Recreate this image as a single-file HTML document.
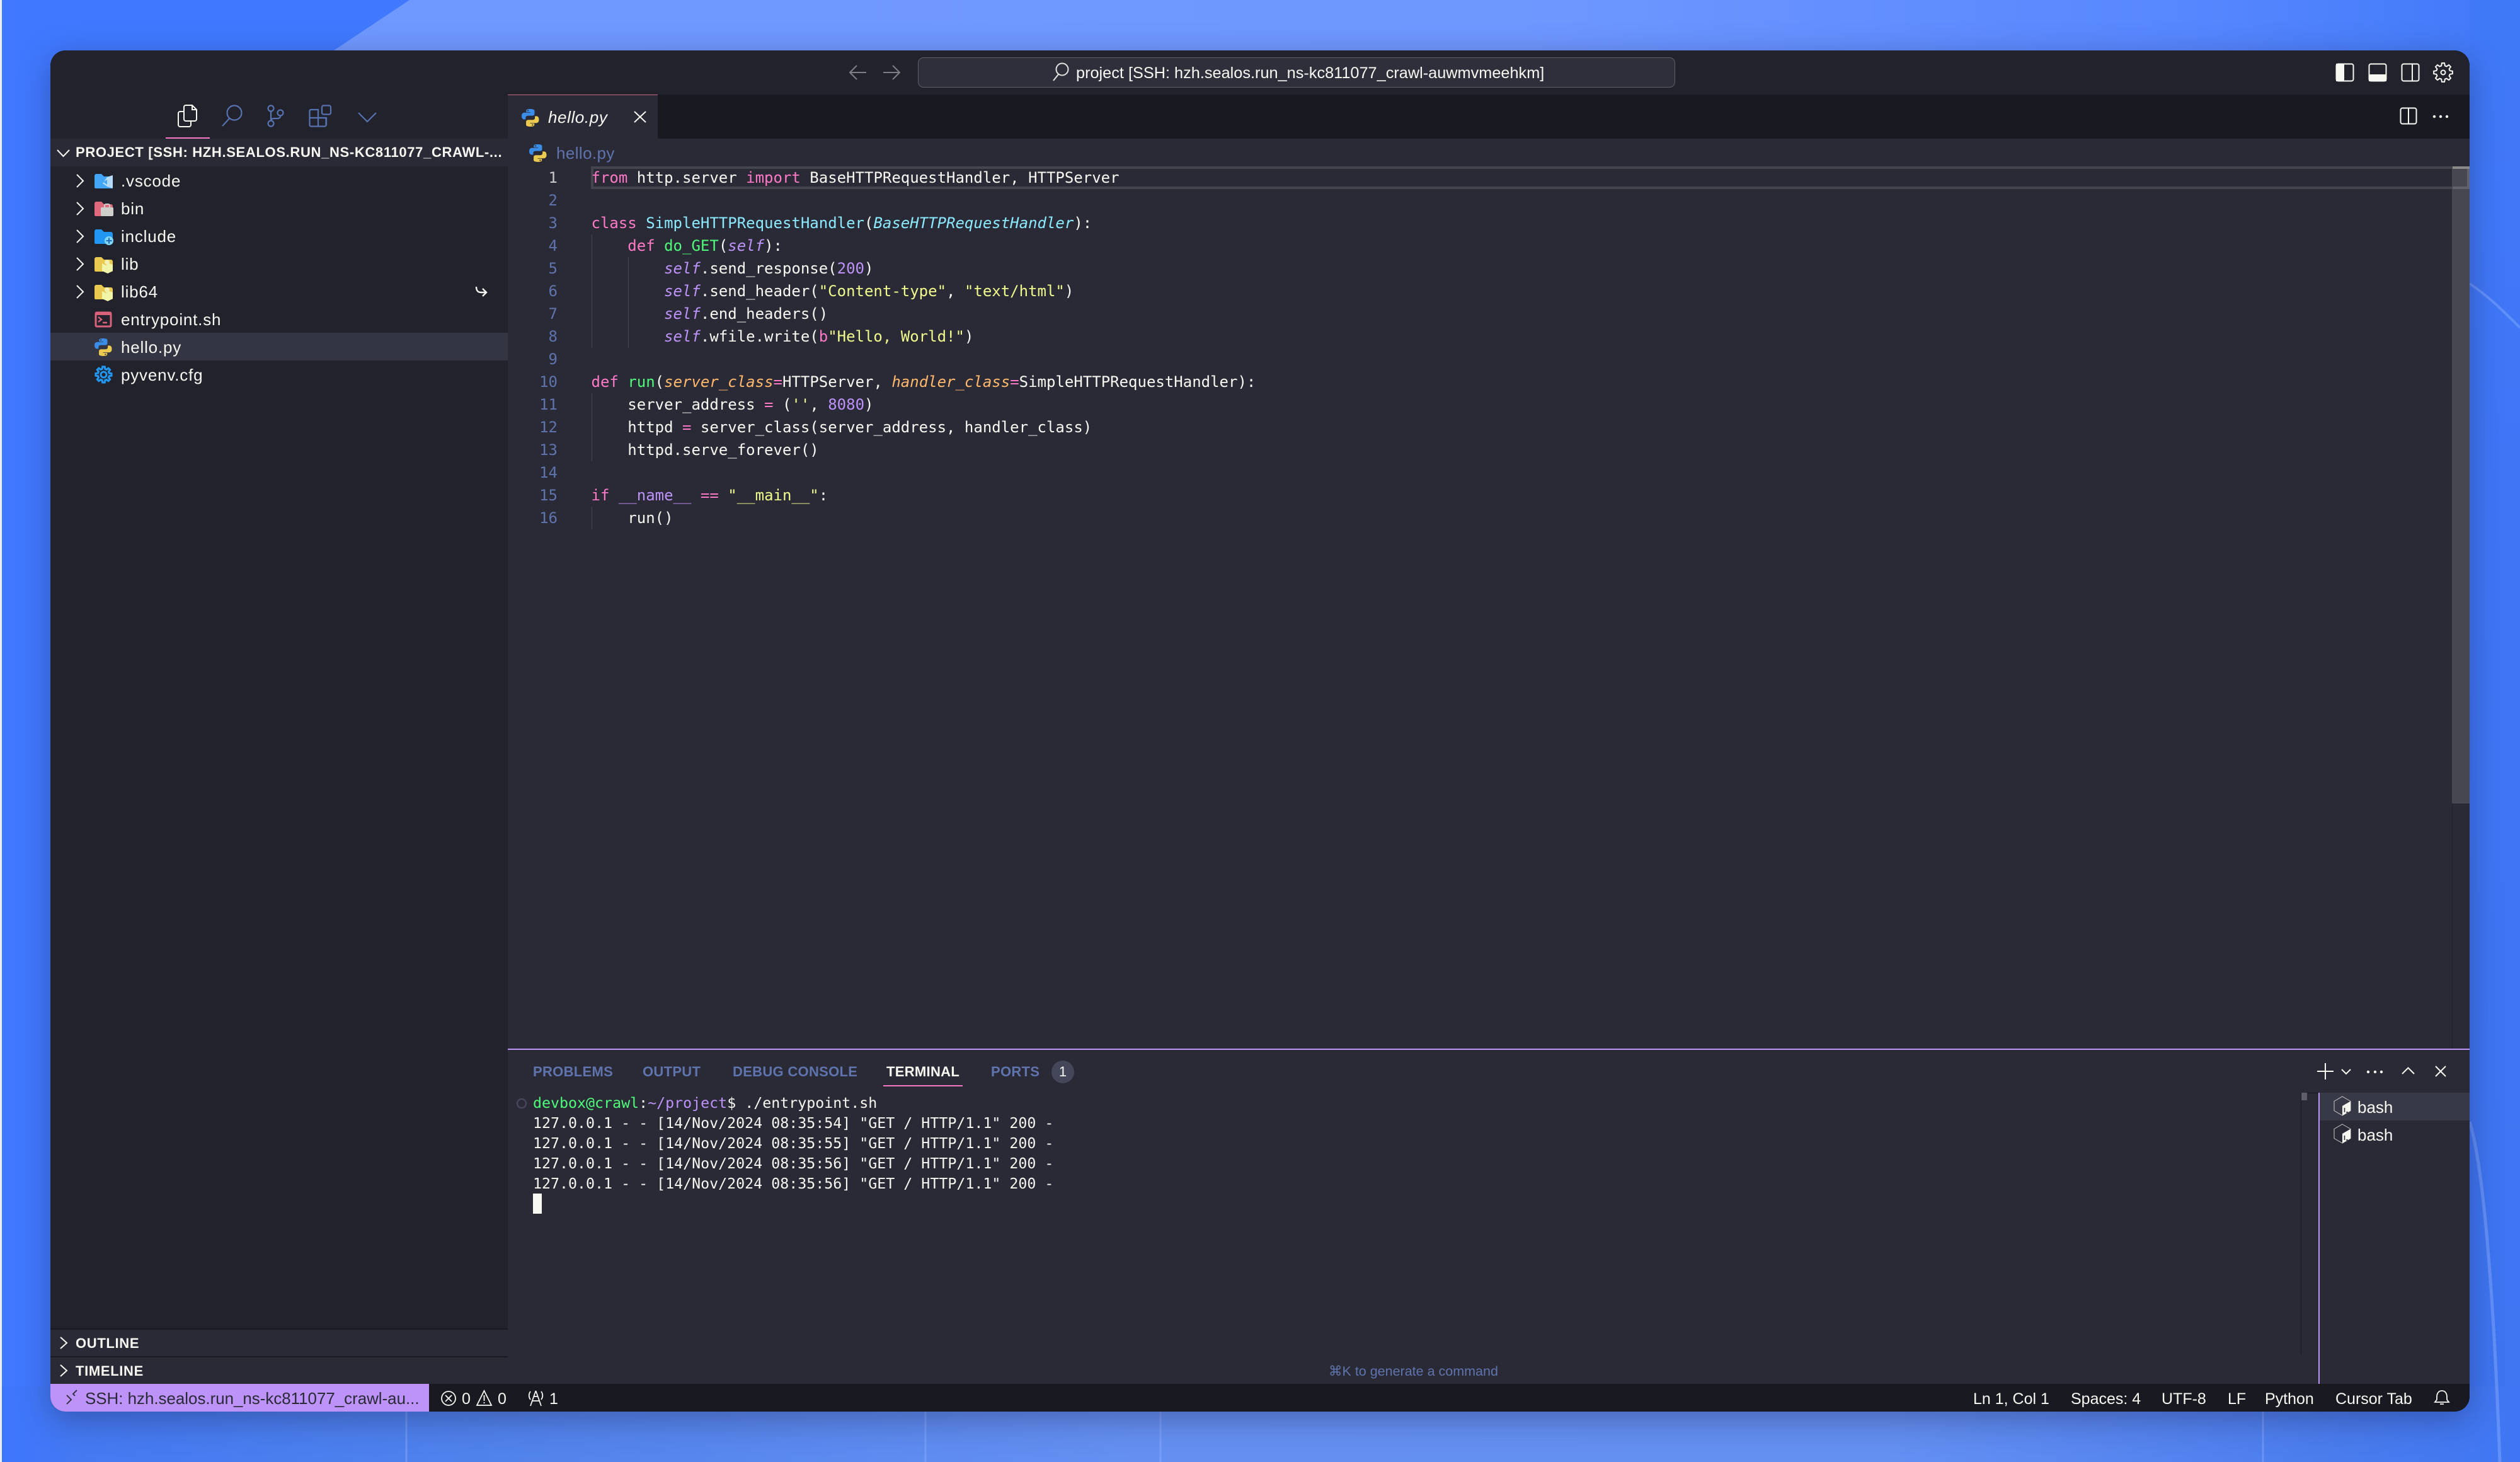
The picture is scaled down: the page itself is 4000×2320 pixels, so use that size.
<!DOCTYPE html>
<html><head><meta charset="utf-8">
<style>
html,body{margin:0;padding:0;width:4000px;height:2320px;overflow:hidden;background:#4179ff}
body{position:relative;font-family:"Liberation Sans",sans-serif;-webkit-font-smoothing:antialiased}
#bg{position:absolute;left:0;top:0}
#shadow{position:absolute;left:80px;top:80px;width:3840px;height:2160px;border-radius:24px;box-shadow:0 12px 50px rgba(25,30,70,.38)}
#win{position:absolute;left:80px;top:80px;width:3840px;height:2160px;border-radius:24px;overflow:hidden;background:#2a2a36}
#in{position:absolute;left:-80px;top:-80px;width:4000px;height:2320px}
.b{position:absolute}
.t{position:absolute;white-space:pre;color:#f8f8f2}
.r{font-size:26px;line-height:44px;height:44px;left:192px;letter-spacing:.8px}
.h{font-size:22px;line-height:44px;height:44px;left:120px;font-weight:bold;letter-spacing:.66px}
.p{font-size:22px;line-height:44px;height:44px;top:1679px;font-weight:bold;color:#5f74ad;letter-spacing:.3px}
.s{font-size:25px;line-height:44px;height:44px;top:2198px}
.c{position:absolute;left:938.5px;white-space:pre;font-family:"DejaVu Sans Mono","Liberation Mono",monospace;font-size:24px;line-height:36px;height:36px;color:#f8f8f2}
.n{position:absolute;left:800px;width:85px;text-align:right;font-family:"DejaVu Sans Mono","Liberation Mono",monospace;font-size:24px;line-height:36px;height:36px;color:#5f74ad}
.m{position:absolute;left:846px;white-space:pre;font-family:"DejaVu Sans Mono","Liberation Mono",monospace;font-size:23.27px;line-height:32px;height:32px;color:#f8f8f2}
.k{color:#ff79c6}.g{color:#50fa7b}.y{color:#8be9fd}.yi{color:#8be9fd;font-style:italic}.u{color:#bd93f9}.ui{color:#bd93f9;font-style:italic}.q{color:#f1fa8c}.o{color:#ffb86c;font-style:italic}
#ic{position:absolute;left:0;top:0}
</style></head>
<body>
<svg id="bg" width="4000" height="2320" viewBox="0 0 4000 2320">
<defs>
<linearGradient id="wedge" x1="0" y1="0" x2="1" y2="0"><stop offset="0" stop-color="#7099ff"/><stop offset=".55" stop-color="#6f98ff"/><stop offset=".85" stop-color="#5787ff"/><stop offset="1" stop-color="#4079f8"/></linearGradient>
<linearGradient id="bot" x1="0" y1="0" x2="1" y2="0"><stop offset="0" stop-color="#3d76ff"/><stop offset=".03" stop-color="#4479f2"/><stop offset=".2" stop-color="#5183ec"/><stop offset=".45" stop-color="#6590f2"/><stop offset=".75" stop-color="#6490f2"/><stop offset=".93" stop-color="#4a7ced"/><stop offset="1" stop-color="#3f76f3"/></linearGradient>
<linearGradient id="rt" x1="0" y1="0" x2="0" y2="1"><stop offset="0" stop-color="#4079f8"/><stop offset=".3" stop-color="#3f76f5"/><stop offset="1" stop-color="#3d74ee"/></linearGradient>
</defs>
<rect width="4000" height="2320" fill="#4079ff"/>
<polygon points="650,0 4000,0 4000,260 500,100" fill="url(#wedge)"/>
<rect x="3920" y="0" width="80" height="2320" fill="url(#rt)" opacity=".85"/>
<rect x="0" y="2200" width="4000" height="120" fill="url(#bot)"/>
<g stroke="#8fb0ff" stroke-width="3" fill="none" opacity=".45">
<path d="M645 2240V2320M1469 2240V2320M1842 2240V2320M3592 2240V2320"/>
<path d="M3920 450C3950 470 3975 495 4000 520" stroke-width="4"/>
<path d="M3920 1780C3945 1860 3960 2100 3968 2320" stroke-width="5"/>
</g>
<rect x="0" y="0" width="3" height="2320" fill="#e8eefc"/>
</svg>
<div id="shadow"></div>
<div id="win"><div id="in">
<!-- panels -->
<div class="b" style="left:80px;top:80px;width:3840px;height:70px;background:#21222c"></div>
<div class="b" style="left:80px;top:150px;width:726px;height:2046px;background:#21222c"></div>
<div class="b" style="left:806px;top:150px;width:3114px;height:70px;background:#191a21"></div>
<div class="b" style="left:806px;top:150px;width:238px;height:70px;background:#2a2a36"></div>
<div class="b" style="left:806px;top:150px;width:238px;height:1px;background:#c9627f"></div>
<div class="b" style="left:1457px;top:91px;width:1200px;height:46px;background:#2f2f3b;border:1.5px solid #5f5f69;border-radius:9px"></div>
<div class="b" style="left:80px;top:220px;width:726px;height:44px;background:#2a2a36"></div>
<div class="b" style="left:80px;top:528px;width:726px;height:44px;background:#343543"></div>
<div class="b" style="left:80px;top:2108px;width:726px;height:2px;background:#191a21"></div>
<div class="b" style="left:80px;top:2110px;width:726px;height:42px;background:#2a2a36"></div>
<div class="b" style="left:80px;top:2152px;width:726px;height:2px;background:#191a21"></div>
<div class="b" style="left:80px;top:2154px;width:726px;height:42px;background:#2a2a36"></div>
<div class="b" style="left:80px;top:2196px;width:3840px;height:44px;background:#191a21"></div>
<div class="b" style="left:80px;top:2196px;width:601px;height:44px;background:#bd93f9"></div>
<!-- editor decorations -->
<div class="b" style="left:938px;top:264px;width:2954px;height:36px;box-sizing:border-box;border:4px solid #45454f;border-right:0"></div>
<div class="b" style="left:3892px;top:264px;width:28px;height:1011px;background:#474752"></div>
<div class="b" style="left:3893px;top:264px;width:27px;height:4px;background:#8a8a88"></div>
<div class="b" style="left:3916px;top:268px;width:4px;height:32px;background:#62626c"></div>
<div class="b" style="left:3893px;top:296px;width:27px;height:4px;background:#62626c"></div>
<div class="b" style="left:3892px;top:1275px;width:1px;height:389px;background:#21222c"></div>
<div class="b" style="left:939px;top:372px;width:1px;height:180px;background:#454652"></div>
<div class="b" style="left:997px;top:408px;width:1px;height:144px;background:#454652"></div>
<div class="b" style="left:939px;top:624px;width:1px;height:108px;background:#454652"></div>
<div class="b" style="left:939px;top:804px;width:1px;height:36px;background:#454652"></div>
<!-- panel -->
<div class="b" style="left:806px;top:1664px;width:3114px;height:2px;background:#bd93f9"></div>
<div class="b" style="left:1402px;top:1722px;width:126px;height:2px;background:#ff79c6"></div>
<div class="b" style="left:1669px;top:1683px;width:36px;height:36px;border-radius:18px;background:#44475a"></div>
<div class="b" style="left:846px;top:1894px;width:14px;height:32px;background:#f8f8f2"></div>
<div class="b" style="left:3652px;top:1734px;width:1px;height:416px;background:#191a21"></div>
<div class="b" style="left:3652px;top:1734px;width:28px;height:1px;background:#191a21"></div>
<div class="b" style="left:3653px;top:1734px;width:9px;height:12px;background:#5f5d6b"></div>
<div class="b" style="left:3680px;top:1734px;width:2px;height:462px;background:#bd93f9"></div>
<div class="b" style="left:3682px;top:1734px;width:238px;height:44px;background:#383947"></div>

<!-- title -->
<div class="t" style="left:1708px;top:94px;font-size:25.3px;line-height:44px">project [SSH: hzh.sealos.run_ns-kc811077_crawl-auwmvmeehkm]</div>
<!-- tab -->
<div class="t" style="left:870px;top:164px;font-size:26px;line-height:44px;font-style:italic;letter-spacing:.6px">hello.py</div>
<div class="t" style="left:883px;top:221px;font-size:26px;line-height:44px;color:#5f74ad;letter-spacing:.4px">hello.py</div>
<!-- sidebar -->
<div class="t h" style="top:220px">PROJECT [SSH: HZH.SEALOS.RUN_NS-KC811077_CRAWL-...</div>
<div class="t r" style="top:265px">.vscode</div>
<div class="t r" style="top:309px">bin</div>
<div class="t r" style="top:353px">include</div>
<div class="t r" style="top:397px">lib</div>
<div class="t r" style="top:441px">lib64</div>
<div class="t r" style="top:485px">entrypoint.sh</div>
<div class="t r" style="top:529px">hello.py</div>
<div class="t r" style="top:573px">pyvenv.cfg</div>
<div class="t h" style="top:2110px">OUTLINE</div>
<div class="t h" style="top:2154px">TIMELINE</div>

<!-- line numbers -->
<div class="n" style="top:264px;color:#c8c8c8">1</div>
<div class="n" style="top:300px">2</div><div class="n" style="top:336px">3</div><div class="n" style="top:372px">4</div>
<div class="n" style="top:408px">5</div><div class="n" style="top:444px">6</div><div class="n" style="top:480px">7</div>
<div class="n" style="top:516px">8</div><div class="n" style="top:552px">9</div><div class="n" style="top:588px">10</div>
<div class="n" style="top:624px">11</div><div class="n" style="top:660px">12</div><div class="n" style="top:696px">13</div>
<div class="n" style="top:732px">14</div><div class="n" style="top:768px">15</div><div class="n" style="top:804px">16</div>
<!-- code -->
<div class="c" style="top:264px"><span class="k">from</span> http.server <span class="k">import</span> BaseHTTPRequestHandler, HTTPServer</div>
<div class="c" style="top:336px"><span class="k">class</span> <span class="y">SimpleHTTPRequestHandler</span>(<span class="yi">BaseHTTPRequestHandler</span>):</div>
<div class="c" style="top:372px">    <span class="k">def</span> <span class="g">do_GET</span>(<span class="ui">self</span>):</div>
<div class="c" style="top:408px">        <span class="ui">self</span>.send_response(<span class="u">200</span>)</div>
<div class="c" style="top:444px">        <span class="ui">self</span>.send_header(<span class="q">"Content-type"</span>, <span class="q">"text/html"</span>)</div>
<div class="c" style="top:480px">        <span class="ui">self</span>.end_headers()</div>
<div class="c" style="top:516px">        <span class="ui">self</span>.wfile.write(<span class="k">b</span><span class="q">"Hello, World!"</span>)</div>
<div class="c" style="top:588px"><span class="k">def</span> <span class="g">run</span>(<span class="o">server_class</span><span class="k">=</span>HTTPServer, <span class="o">handler_class</span><span class="k">=</span>SimpleHTTPRequestHandler):</div>
<div class="c" style="top:624px">    server_address <span class="k">=</span> (<span class="q">''</span>, <span class="u">8080</span>)</div>
<div class="c" style="top:660px">    httpd <span class="k">=</span> server_class(server_address, handler_class)</div>
<div class="c" style="top:696px">    httpd.serve_forever()</div>
<div class="c" style="top:768px"><span class="k">if</span> <span class="u">__name__</span> <span class="k">==</span> <span class="q">"__main__"</span>:</div>
<div class="c" style="top:804px">    run()</div>

<!-- panel tabs -->
<div class="t p" style="left:846px">PROBLEMS</div>
<div class="t p" style="left:1020px">OUTPUT</div>
<div class="t p" style="left:1163px">DEBUG CONSOLE</div>
<div class="t p" style="left:1407px;color:#f8f8f2">TERMINAL</div>
<div class="t p" style="left:1573px">PORTS</div>
<div class="t" style="left:1669px;width:36px;text-align:center;top:1679px;font-size:22px;line-height:44px">1</div>
<!-- terminal -->
<div class="m" style="top:1735px"><span class="g">devbox@crawl</span>:<span class="u">~/project</span>$ ./entrypoint.sh</div>
<div class="m" style="top:1767px">127.0.0.1 - - [14/Nov/2024 08:35:54] "GET / HTTP/1.1" 200 -</div>
<div class="m" style="top:1799px">127.0.0.1 - - [14/Nov/2024 08:35:55] "GET / HTTP/1.1" 200 -</div>
<div class="m" style="top:1831px">127.0.0.1 - - [14/Nov/2024 08:35:56] "GET / HTTP/1.1" 200 -</div>
<div class="m" style="top:1863px">127.0.0.1 - - [14/Nov/2024 08:35:56] "GET / HTTP/1.1" 200 -</div>
<div class="t" style="left:3742px;top:1735px;font-size:26px;line-height:44px">bash</div>
<div class="t" style="left:3742px;top:1779px;font-size:26px;line-height:44px">bash</div>
<div class="t" style="left:2109px;top:2154px;font-size:21.5px;line-height:44px;color:#5f74ad;font-family:'Liberation Sans','DejaVu Sans',sans-serif">⌘K to generate a command</div>
<!-- status -->
<div class="t s" style="left:135px;color:#282a36;font-size:25.9px">SSH: hzh.sealos.run_ns-kc811077_crawl-au...</div>
<div class="t s" style="left:733px">0</div>
<div class="t s" style="left:790px">0</div>
<div class="t s" style="left:872px">1</div>
<div class="t s" style="left:3132px">Ln 1, Col 1</div>
<div class="t s" style="left:3287px">Spaces: 4</div>
<div class="t s" style="left:3431px">UTF-8</div>
<div class="t s" style="left:3536px">LF</div>
<div class="t s" style="left:3595px">Python</div>
<div class="t s" style="left:3707px">Cursor Tab</div>

<!-- icons -->
<svg id="ic" width="4000" height="2320" viewBox="0 0 4000 2320" fill="none">
<defs>
<g id="py"><path fill="#3b8ee8" d="M11.9 1C7.600 1 8 2.900 8 2.900v2h4.100v.6H6.200S3.400 5.200 3.400 9.700s2.500 4.300 2.500 4.300h1.500v-2.100s-.1-2.500 2.400-2.500h4.100s2.300 0 2.300-2.300V3.300S16.600 1 11.900 1zM9.700 2.300a.75.75 0 1 1 0 1.500.75.75 0 0 1 0-1.500z"/><path fill="#ecc94f" d="M12.100 23c4.300 0 3.900-1.900 3.900-1.900v-2h-4.100v-.6h5.900s2.800.3 2.800-4.200-2.500-4.300-2.500-4.300h-1.500v2.100s.1 2.500-2.400 2.500h-4.100s-2.300 0-2.300 2.300v3.800S7.400 23 12.100 23zm2.200-1.300a.75.75 0 1 1 0-1.500.75.75 0 0 1 0 1.500z"/></g>
<path id="fold" d="M0-8a3 3 0 0 1 3-3h8l4 4h11a3 3 0 0 1 3 3v14a2 2 0 0 1-2 2H2a2 2 0 0 1-2-2z"/>
<polygon id="gear" points="13.15,5.37 13.91,1.15 18.09,1.15 18.85,5.37 21.5,6.47 25.03,4.02 27.98,6.97 25.53,10.5 26.63,13.15 30.85,13.91 30.85,18.09 26.63,18.85 25.53,21.5 27.98,25.03 25.03,27.98 21.5,25.53 18.85,26.63 18.09,30.85 13.91,30.85 13.15,26.63 10.5,25.53 6.97,27.98 4.02,25.03 6.47,21.5 5.37,18.85 1.15,18.09 1.15,13.91 5.37,13.15 6.47,10.5 4.02,6.97 6.97,4.02 10.5,6.47"/>
<g id="libf"><use href="#fold" fill="#e9c94f"/><path d="M12 -1l6 3 5-3 6 2v10l-8 4-9-4z" fill="#f1f5a8"/><circle cx="20" cy="-3" r="4" fill="#f3efb0"/></g>
<g id="bash"><polygon points="13,0 26,7.500 26,22.500 13,30 0,22.500 0,7.500" stroke="#c9c9c9" stroke-width="1"/><polygon points="26,7.500 26,22.500 13,30 13,15" fill="#f8f8f2"/><path d="M16.500 18v7M19 25h3" stroke="#282a36" stroke-width="1.600"/></g>
</defs>
<!-- activity -->
<g stroke="#f8f8f2" stroke-width="2">
<path d="M292 170a3 3 0 0 1 3-3h10l7 7v15a3 3 0 0 1-3 3h-14a3 3 0 0 1-3-3zM305 167v7h7"/>
<path d="M292 177h-6a3 3 0 0 0-3 3v18a3 3 0 0 0 3 3h14a3 3 0 0 0 3-3v-6"/>
</g>
<g stroke="#5672b0" stroke-width="2.200">
<circle cx="372" cy="179" r="11.500"/><path d="M364 188L353 200"/>
<circle cx="430" cy="172" r="4.500"/><circle cx="430" cy="196" r="4.500"/><circle cx="445" cy="179" r="4.500"/>
<path d="M430 176.500V191.500M445 183.500c0 4-2 4.500-6 4.500h-3c-4 0-6 1-6 3.500"/>
<rect x="511" y="167.500" width="14" height="14" rx="2.500"/>
<path d="M493.500 174h11.500v26.500h-11.500a2 2 0 0 1-2-2v-22.500a2 2 0 0 1 2-2zM491.500 187h26v11.500a2 2 0 0 1-2 2h-10.500"/>
<path d="M505 187h13v11.500"/>
<path d="M569 179L583 193L597 179"/>
</g>
<rect x="263" y="218" width="70" height="2" fill="#ff79c6"/>
<!-- tree chevrons -->
<g stroke="#f8f8f2" stroke-width="2">
<path d="M91 238l9.500 10 9.500-10"/>
<path d="M122 277l10 10-10 10M122 321l10 10-10 10M122 365l10 10-10 10M122 409l10 10-10 10M122 453l10 10-10 10"/>
<path d="M96 2122l10 9-10 9M96 2166l10 9-10 9"/>
<path d="M756 455c0 7 3 9 8 9h7M766 458l6 6-6 6" stroke-width="2.400"/>
</g>
<!-- file icons -->
<g transform="translate(150,287)"><use href="#fold" fill="#42a5f5"/><path d="M20-6l9-3v21l-9-3-7-5zM14 2l6 4V-2z" fill="#b3daf7"/></g>
<g transform="translate(150,331)"><use href="#fold" fill="#e0697e"/><rect x="10" y="-2" width="20" height="14" rx="2" fill="#cfcfcb"/><path d="M16-2v-3a2 2 0 0 1 2-2h4a2 2 0 0 1 2 2v3" stroke="#cfcfcb" stroke-width="2"/></g>
<g transform="translate(150,375)"><use href="#fold" fill="#2196f3"/><circle cx="23" cy="7" r="7" fill="#81d4fa"/><path d="M23 2.500v9M18.500 7h9" stroke="#1f6fb8" stroke-width="2"/></g>
<use href="#libf" transform="translate(150,419)"/>
<use href="#libf" transform="translate(150,463)"/>
<rect x="152" y="496" width="24" height="22" rx="1.500" stroke="#d9627a" stroke-width="3"/><rect x="152" y="495" width="24" height="5" fill="#d9627a"/><path d="M156 503l5 4-5 4M163 512h7" stroke="#d9627a" stroke-width="2.400"/>
<use href="#py" transform="translate(144.560,535.730) scale(1.600,1.270)"/>
<use href="#py" transform="translate(834.560,227.730) scale(1.600,1.270)"/>
<use href="#py" transform="translate(822.560,171.730) scale(1.600,1.270)"/>
<use href="#gear" transform="translate(151,581) scale(.84)" stroke="#2196f3" stroke-width="3.800"/><circle cx="164.500" cy="594.500" r="4.500" stroke="#2196f3" stroke-width="3"/>
<!-- title icons -->
<g stroke="#7e7f85" stroke-width="2"><path d="M1375 115H1350M1360 104L1349 115L1360 126"/><path d="M1402 115H1427M1417 104L1428 115L1417 126"/></g>
<circle cx="1686" cy="110" r="9.500" stroke="#e4e4e0" stroke-width="2"/><path d="M1680 118L1672 128" stroke="#e4e4e0" stroke-width="2"/>
<g stroke="#f8f8f2" stroke-width="2">
<rect x="3708.500" y="101.500" width="27" height="27" rx="3"/><rect x="3709" y="102" width="11" height="26" fill="#f8f8f2"/>
<rect x="3760.500" y="101.500" width="27" height="27" rx="3"/><rect x="3761" y="119" width="26" height="9" fill="#f8f8f2"/>
<rect x="3812.500" y="101.500" width="27" height="27" rx="3"/><path d="M3829 102V128"/>
<use href="#gear" transform="translate(3862,99)" />
<circle cx="3878" cy="115" r="3.500"/>
<rect x="3810.500" y="171.500" width="25" height="25" rx="3"/><path d="M3823 172V196"/>
<path d="M3691 1687V1713M3678 1700H3704"/>
<path d="M3717 1697l7 7 7-7M3813 1704l9.500-9.500 9.500 9.500M3866 1692l16 16M3882 1692l-16 16M1007 177l18 17M1025 177l-18 17"/>
</g>
<g fill="#f8f8f2"><circle cx="3864" cy="185" r="2.200"/><circle cx="3874" cy="185" r="2.200"/><circle cx="3884" cy="185" r="2.200"/><circle cx="3759" cy="1701" r="2.200"/><circle cx="3770" cy="1701" r="2.200"/><circle cx="3780" cy="1701" r="2.200"/></g>
<circle cx="828" cy="1751" r="7" stroke="#44475a" stroke-width="2.500"/>
<use href="#bash" transform="translate(3705,1740)"/>
<use href="#bash" transform="translate(3705,1784)"/>
<!-- status icons -->
<path d="M106 2214l7 7-7 7M122 2206l-6 6 3 3" stroke="#282a36" stroke-width="1.800"/>
<g stroke="#f8f8f2" stroke-width="1.800">
<circle cx="712" cy="2219" r="11"/><path d="M707 2214l10 10M717 2214l-10 10"/>
<path d="M768.500 2207L780 2230H757ZM768.500 2214v9M768.500 2225v2"/>
<path d="M850.500 2207L842 2231M850.500 2207L859 2231M845 2223h11M847 2216h7M842 2208c-3 4-3 9 0 13M859 2208c3 4 3 9 0 13"/>
<path d="M3876 2207c-6 0-8 5-8 10v4l-3 4h22l-3-4v-4c0-5-2-10-8-10zM3873 2228h6"/>
</g>
</svg>
</div></div>
</body></html>
